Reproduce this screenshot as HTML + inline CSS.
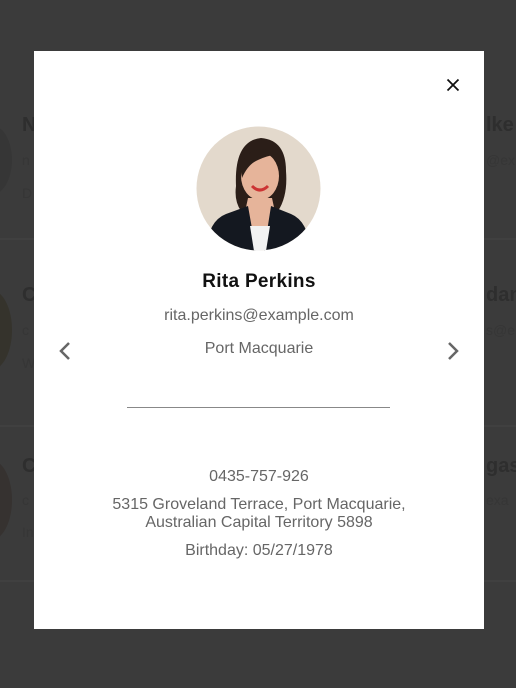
<!DOCTYPE html>
<html><head><style>
*{margin:0;padding:0;box-sizing:border-box}
body{width:516px;height:688px;background:#3b3b3b;position:relative;overflow:hidden;font-family:"Liberation Sans",sans-serif}
.bg{position:absolute;color:#2e2e2e;font-weight:bold;font-size:20px}
.bgs{position:absolute;color:#363636;font-size:14px}
.sep{position:absolute;left:0;width:516px;height:2px;background:#404040}
.modal{position:absolute;left:34px;top:51px;width:450px;height:578px;background:#fff}
.c{position:absolute;left:0;width:450px;text-align:center}
</style></head><body>
<div class="bg" style="left:22px;top:114px">N</div>
<div class="bg" style="left:22px;top:284px">C</div>
<div class="bg" style="left:22px;top:455px">C</div>
<div class="bg" style="left:486px;top:114px">lke</div>
<div class="bg" style="left:486px;top:284px">dam</div>
<div class="bg" style="left:486px;top:455px">gas</div>
<div class="bgs" style="left:22px;top:152px">n</div>
<div class="bgs" style="left:22px;top:185px">D</div>
<div class="bgs" style="left:22px;top:322px">c</div>
<div class="bgs" style="left:22px;top:355px">W</div>
<div class="bgs" style="left:22px;top:492px">c</div>
<div class="bgs" style="left:22px;top:524px">In</div>
<div class="bgs" style="left:486px;top:152px">@ex</div>
<div class="bgs" style="left:486px;top:322px">s@e</div>
<div class="bgs" style="left:486px;top:492px">exa</div>
<div class="sep" style="top:238px"></div>
<div class="sep" style="top:425px"></div>
<div class="sep" style="top:580px"></div>
<div style="position:absolute;left:-30px;top:125px;width:42px;height:70px;border-radius:50%;background:#363636"></div>
<div style="position:absolute;left:-30px;top:290px;width:42px;height:80px;border-radius:50%;background:#35332c"></div>
<div style="position:absolute;left:-30px;top:460px;width:42px;height:80px;border-radius:50%;background:#363230"></div>
<div class="modal">
<svg style="position:absolute;left:412px;top:27px" width="14" height="14" viewBox="0 0 14 14"><path d="M1.5 1.5L12.5 12.5M12.5 1.5L1.5 12.5" stroke="#111" stroke-width="1.8"/></svg>
<svg style="position:absolute;left:162px;top:75px" width="125" height="125" viewBox="0 0 125 125">
<defs><clipPath id="cp"><circle cx="62.5" cy="62.5" r="62"/></clipPath></defs>
<g clip-path="url(#cp)">
<rect width="125" height="125" fill="#e3d9cc"/>
<path d="M40 60 Q38 15 65 12 Q90 14 90 45 Q92 70 82 85 L45 85 Q38 75 40 60Z" fill="#2b1e18"/>
<ellipse cx="64" cy="50" rx="19" ry="24" fill="#e6b49a"/>
<path d="M44 40 Q55 15 82 28 Q70 30 62 34 Q52 38 46 52Z" fill="#2b1e18"/>
<path d="M56 60 Q64 68 72 60" stroke="#c33" stroke-width="3" fill="none"/>
<path d="M52 72 L76 72 L82 100 L46 100Z" fill="#e6b49a"/>
<path d="M10 125 Q12 95 30 88 L52 80 L60 125Z M115 125 Q112 95 95 88 L75 80 L68 125Z" fill="#141820"/>
<path d="M54 100 L74 100 L70 125 L58 125Z" fill="#f2f2f2"/>
</g></svg>
<div class="c" style="top:220px;font-size:19px;font-weight:bold;color:#111;letter-spacing:0.3px">Rita Perkins</div>
<div class="c" style="top:256px;font-size:16px;color:#666">rita.perkins@example.com</div>
<div class="c" style="top:289px;font-size:16px;color:#666">Port Macquarie</div>
<svg style="position:absolute;left:24px;top:290px" width="14" height="20" viewBox="0 0 14 20"><path d="M11 2L3 10L11 18" stroke="#666" stroke-width="2.5" fill="none"/></svg>
<svg style="position:absolute;left:412px;top:290px" width="14" height="20" viewBox="0 0 14 20"><path d="M3 2L11 10L3 18" stroke="#666" stroke-width="2.5" fill="none"/></svg>
<div style="position:absolute;left:93px;top:356px;width:263px;height:1px;background:#888"></div>
<div class="c" style="top:417px;font-size:16px;color:#666">0435-757-926</div>
<div class="c" style="top:445px;font-size:16px;color:#666;line-height:18px">5315 Groveland Terrace, Port Macquarie,<br>Australian Capital Territory 5898</div>
<div class="c" style="top:491px;font-size:16px;color:#666">Birthday: 05/27/1978</div>
</div>
</body></html>
